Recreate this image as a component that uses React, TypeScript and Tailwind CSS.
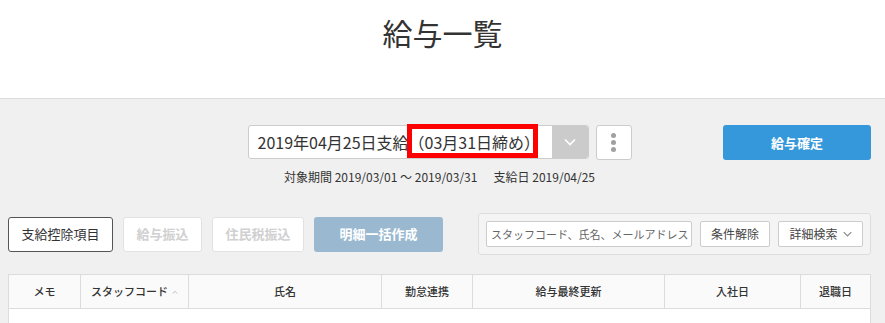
const font = { fontFamily: '"Noto Sans CJK JP", "Noto Sans", sans-serif' };

function Chevron({ className }: { className?: string }) {
  return (
    <svg viewBox="0 0 12 8" className={className} fill="none" stroke="currentColor" strokeWidth="1.6">
      <path d="M1 1.5 6 6.5 11 1.5" />
    </svg>
  );
}

const columns = [
  { label: "メモ", w: "w-[71px]" },
  { label: "スタッフコード", w: "w-[108px]", sort: true },
  { label: "氏名", w: "w-[193px]" },
  { label: "勤怠連携", w: "w-[91px]" },
  { label: "給与最終更新", w: "w-[192px]" },
  { label: "入社日", w: "w-[136px]" },
  { label: "退職日", w: "flex-1" },
];

export default function App() {
  return (
    <div className="w-[885px] h-[323px] overflow-hidden bg-[#f0f0f0] text-[#333]" style={font}>
      {/* page title */}
      <header className="h-[99px] bg-white border-b border-[#dcdcdc] flex justify-center pt-[13px]">
        <h1 className="text-[30px] leading-[38px] tracking-[0px]">給与一覧</h1>
      </header>

      <div className="pl-[8px] pr-[14px] pt-[26px]">
        {/* payday selector */}
        <div className="grid grid-cols-[1fr_auto_1fr] items-start">
          <div />
          <div className="flex flex-col items-center">
            <div className="flex gap-[7px]">
              <div className="relative w-[341px] h-[34px] bg-white border border-[#ccc] rounded-[3px] flex items-center">
                <span className="flex-1 pl-[9px] text-[16px] leading-none whitespace-nowrap">
                  2019年04月25日支給（03月31日締め）
                </span>
                <span className="w-[36px] h-full bg-[#cbcbcb] rounded-r-[2px] flex items-center justify-center text-white">
                  <Chevron className="w-[12px] h-[8px]" />
                </span>
                <span className="absolute left-[158px] top-[-2px] w-[131px] h-[34px] border-[5px] border-[#ff0000] pointer-events-none" />
              </div>
              <button className="w-[36px] h-[35px] bg-white border border-[#ccc] rounded-[3px] flex flex-col items-center justify-center gap-[2px]">
                <span className="w-[5px] h-[5px] rounded-full bg-[#a0a0a0]" />
                <span className="w-[5px] h-[5px] rounded-full bg-[#a0a0a0]" />
                <span className="w-[5px] h-[5px] rounded-full bg-[#a0a0a0]" />
              </button>
            </div>
            <p className="mt-[9px] text-[12px] leading-[16px] whitespace-pre">
              対象期間 2019/03/01 ～ 2019/03/31{"      "}支給日 2019/04/25
            </p>
          </div>
          <div className="flex justify-end">
            <button className="w-[148px] h-[35px] bg-[#3498db] rounded-[3px] text-white text-[13px] font-bold">
              給与確定
            </button>
          </div>
        </div>

        {/* actions + search */}
        <div className="mt-[28px] flex items-center justify-between">
          <div className="flex gap-[10px]">
            <button className="w-[105px] h-[35px] bg-white border border-[#555] rounded-[3px] text-[13px]">
              支給控除項目
            </button>
            <button className="w-[79px] h-[35px] bg-white border border-[#e2e2e2] rounded-[3px] text-[13px] font-bold text-[#d0d0d0]">
              給与振込
            </button>
            <button className="w-[92px] h-[35px] bg-white border border-[#e2e2e2] rounded-[3px] text-[13px] font-bold text-[#d0d0d0]">
              住民税振込
            </button>
            <button className="w-[129px] h-[35px] bg-[#9ab9d1] rounded-[3px] text-[13px] font-bold text-white">
              明細一括作成
            </button>
          </div>
          <div className="w-[393px] h-[42px] bg-[#f4f4f4] border border-[#dedede] rounded-[3px] flex items-center gap-[8px] pl-[7px]">
            <div className="w-[206px] h-[26px] bg-white border border-[#ccc] rounded-[2px] flex items-center pl-[4px] text-[11px] text-[#666] whitespace-nowrap overflow-hidden">
              スタッフコード、氏名、メールアドレス
            </div>
            <button className="w-[70px] h-[26px] bg-white border border-[#ccc] rounded-[2px] text-[12px] text-[#444]">
              条件解除
            </button>
            <button className="w-[85px] h-[26px] bg-white border border-[#ccc] rounded-[2px] text-[12px] text-[#444] flex items-center justify-center gap-[5px]">
              詳細検索
              <Chevron className="w-[9px] h-[6px] text-[#888]" />
            </button>
          </div>
        </div>

        {/* staff table */}
        <div className="mt-[19px] border border-[#dcdcdc] bg-white">
          <div className="flex h-[34px] bg-[#fafafa] border-b border-[#dcdcdc]">
            {columns.map((c, i) => (
              <div
                key={c.label}
                className={`${c.w} flex items-center justify-center gap-[4px] text-[11px] font-medium ${
                  i > 0 ? "border-l border-[#dcdcdc]" : ""
                }`}
              >
                {c.label}
                {c.sort && (
                  <svg viewBox="0 0 8 5" className="w-[6px] h-[4px] text-[#aaa]" fill="none" stroke="currentColor" strokeWidth="1">
                    <path d="M1 4.5 4 1.5 7 4.5" />
                  </svg>
                )}
              </div>
            ))}
          </div>
          <div className="h-[40px]" />
        </div>
      </div>
    </div>
  );
}
